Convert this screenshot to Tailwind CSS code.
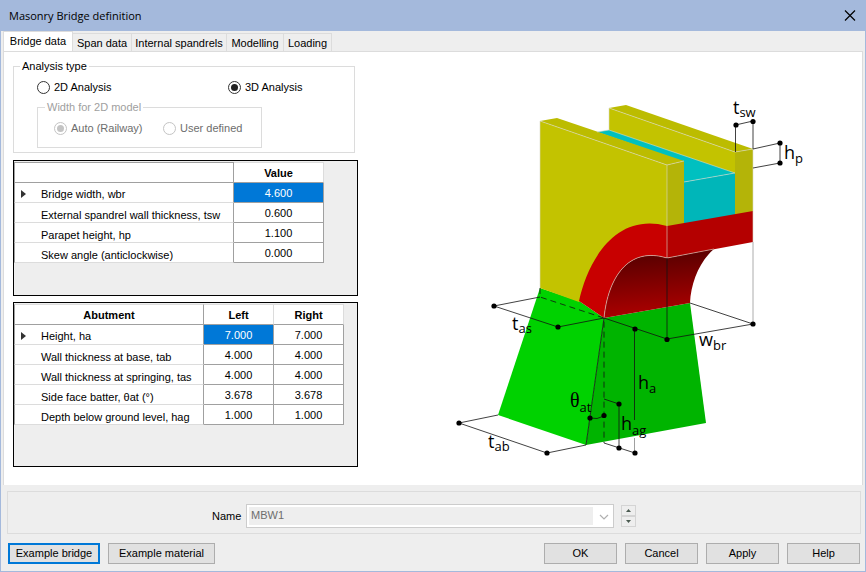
<!DOCTYPE html>
<html lang="en">
    <head>
        <title>Masonry Bridge definition</title>
        <meta charset="UTF-8">
        <meta name="viewport" content="width=device-width, initial-scale=1">
        <script src="https://cdn.jsdelivr.net/npm/@tailwindcss/browser@4"></script>
    </head>
    <body class="min-h-screen flex flex-col bg-[#eeeeee] border border-t-0 border-[#a4b9dc] font-['Liberation_Sans',Arial,sans-serif] text-[11px] leading-4 text-black">
        <header class="h-[31px] shrink-0 flex items-center justify-between bg-[#a4b9dc] pl-2 pr-[9px]">
            <h1 class="font-['Open_Sans',sans-serif] text-[11px]">Masonry Bridge definition</h1>
            <button aria-label="Close" class="p-0">
                <svg class="w-3 h-3" viewBox="0 0 12 12" fill="none" stroke="#000" stroke-width="1.2"><path d="M1 0.500l10 10M11 0.500L1 10.500"/></svg>
            </button>
        </header>

        <main class="flex-1 flex flex-col px-[2px]">
            <nav role="tablist" class="h-5 flex items-end">
                <button role="tab" aria-selected="true" class="h-5 w-[70px] bg-white border border-b-0 border-[#dcdcdc] pb-[2px] z-10">Bridge data</button>
                <button role="tab" class="h-[18px] w-[59px] border-t border-r border-[#dcdcdc]">Span data</button>
                <button role="tab" class="h-[18px] w-[95px] border-t border-r border-[#dcdcdc] whitespace-nowrap">Internal spandrels</button>
                <button role="tab" class="h-[18px] w-[57px] border-t border-r border-[#dcdcdc]">Modelling</button>
                <button role="tab" class="h-[18px] w-[48px] border-t border-r border-[#dcdcdc]">Loading</button>
            </nav>

            <section role="tabpanel" class="flex-1 flex bg-white border border-b-0 border-[#dcdcdc] pl-[9px] pt-[6px]">
                <div class="w-[345px] shrink-0 flex flex-col">
                    <fieldset class="w-[342px] border border-[#dcdcdc] px-[23px] pt-px pb-1">
                        <legend class="-ml-[17px] px-[2px]">Analysis type</legend>
                        <div class="flex items-center h-6">
                            <label class="flex items-center gap-1 w-[191px]">
                                <input type="radio" name="analysis" class="appearance-none w-[13px] h-[13px] rounded-full border border-[#333] bg-white">2D Analysis
                            </label>
                            <label class="flex items-center gap-1">
                                <input type="radio" name="analysis" checked class="appearance-none w-[13px] h-[13px] rounded-full border border-[#333] bg-[#222] bg-clip-content p-[2px]">3D Analysis
                            </label>
                        </div>
                        <fieldset disabled class="w-[225px] border border-[#dcdcdc] pl-4 pt-px pb-[7px] text-[#6d6d6d]">
                            <legend class="-ml-[9px] px-[2px] text-[#a0a0a0]">Width for 2D model</legend>
                            <div class="flex items-center h-6">
                                <label class="flex items-center gap-1 w-[109px] whitespace-nowrap">
                                    <input type="radio" name="width" checked class="appearance-none w-[13px] h-[13px] rounded-full border border-[#c4c4c4] bg-[#c4c4c4] bg-clip-content p-[2px]">Auto (Railway)
                                </label>
                                <label class="flex items-center gap-1 whitespace-nowrap">
                                    <input type="radio" name="width" class="appearance-none w-[13px] h-[13px] rounded-full border border-[#c4c4c4] bg-white">User defined
                                </label>
                            </div>
                        </fieldset>
                    </fieldset>

                    <div class="h-[136px] mt-[7px] border border-black bg-[#eeeeee] pt-px">
                        <table class="table-fixed w-[310px] border-separate border-spacing-0 bg-white text-center">
                            <thead>
                                <tr class="h-[21px]">
                                    <th class="w-[220px] p-0 border-r border-b border-t border-l border-[#a0a0a0]"></th>
                                    <th class="p-0 border-r border-b border-t border-[#a0a0a0] border-t-[#dcdcdc] border-r-[#dcdcdc]">Value</th>
                                </tr>
                            </thead>
                            <tbody>
                                <tr class="h-5">
                                    <th class="p-0 border-r border-b border-l border-[#a0a0a0] border-b-[#dcdcdc] font-normal text-left">
                                        <div class="flex items-center pl-[5px] pt-[3px] h-[19px]"><svg class="w-[21px] h-2" viewBox="0 0 21 8" fill="#333"><path d="M1 0l5 4-5 4z"/></svg>Bridge width, wbr</div>
                                    </th>
                                    <td class="p-0 border-r border-b border-[#a0a0a0] bg-[#0078d7] text-white">4.600</td>
                                </tr>
                                <tr class="h-5">
                                    <th class="p-0 border-r border-b border-l border-[#a0a0a0] border-b-[#dcdcdc] font-normal text-left whitespace-nowrap"><div class="pl-[26px] pt-1 h-[19px]">External spandrel wall thickness, tsw</div></th>
                                    <td class="p-0 border-r border-b border-[#a0a0a0]">0.600</td>
                                </tr>
                                <tr class="h-5">
                                    <th class="p-0 border-r border-b border-l border-[#a0a0a0] border-b-[#dcdcdc] font-normal text-left"><div class="pl-[26px] pt-1 h-[19px]">Parapet height, hp</div></th>
                                    <td class="p-0 border-r border-b border-[#a0a0a0]">1.100</td>
                                </tr>
                                <tr class="h-5">
                                    <th class="p-0 border-r border-b border-l border-[#a0a0a0] border-b-[#dcdcdc] font-normal text-left"><div class="pl-[26px] pt-1 h-[19px]">Skew angle (anticlockwise)</div></th>
                                    <td class="p-0 border-r border-b border-[#a0a0a0]">0.000</td>
                                </tr>
                            </tbody>
                        </table>
                    </div>

                    <div class="h-[165px] mt-[6px] border border-black bg-[#eeeeee] pt-px">
                        <table class="table-fixed w-[330px] border-separate border-spacing-0 bg-white text-center">
                            <thead>
                                <tr class="h-[21px]">
                                    <th class="w-[190px] p-0 border-r border-b border-l border-t border-[#a0a0a0] border-t-[#dcdcdc]">Abutment</th>
                                    <th class="w-[70px] p-0 border-r border-b border-t border-[#a0a0a0] border-t-[#dcdcdc] border-r-[#dcdcdc]">Left</th>
                                    <th class="w-[70px] p-0 border-r border-b border-t border-[#a0a0a0] border-t-[#dcdcdc] border-r-[#dcdcdc]">Right</th>
                                </tr>
                            </thead>
                            <tbody>
                                <tr class="h-5">
                                    <th class="p-0 border-r border-b border-l border-[#a0a0a0] border-b-[#dcdcdc] font-normal text-left">
                                        <div class="flex items-center pl-[5px] pt-[3px] h-[19px]"><svg class="w-[21px] h-2" viewBox="0 0 21 8" fill="#333"><path d="M1 0l5 4-5 4z"/></svg>Height, ha</div>
                                    </th>
                                    <td class="p-0 border-r border-b border-[#a0a0a0] bg-[#0078d7] text-white">7.000</td>
                                    <td class="p-0 border-r border-b border-[#a0a0a0]">7.000</td>
                                </tr>
                                <tr class="h-5">
                                    <th class="p-0 border-r border-b border-l border-[#a0a0a0] border-b-[#dcdcdc] font-normal text-left"><div class="pl-[26px] pt-1 h-[19px]">Wall thickness at base, tab</div></th>
                                    <td class="p-0 border-r border-b border-[#a0a0a0]">4.000</td>
                                    <td class="p-0 border-r border-b border-[#a0a0a0]">4.000</td>
                                </tr>
                                <tr class="h-5">
                                    <th class="p-0 border-r border-b border-l border-[#a0a0a0] border-b-[#dcdcdc] font-normal text-left whitespace-nowrap"><div class="pl-[26px] pt-1 h-[19px]">Wall thickness at springing, tas</div></th>
                                    <td class="p-0 border-r border-b border-[#a0a0a0]">4.000</td>
                                    <td class="p-0 border-r border-b border-[#a0a0a0]">4.000</td>
                                </tr>
                                <tr class="h-5">
                                    <th class="p-0 border-r border-b border-l border-[#a0a0a0] border-b-[#dcdcdc] font-normal text-left"><div class="pl-[26px] pt-1 h-[19px]">Side face batter, θat (°)</div></th>
                                    <td class="p-0 border-r border-b border-[#a0a0a0]">3.678</td>
                                    <td class="p-0 border-r border-b border-[#a0a0a0]">3.678</td>
                                </tr>
                                <tr class="h-5">
                                    <th class="p-0 border-r border-b border-l border-[#a0a0a0] border-b-[#dcdcdc] font-normal text-left whitespace-nowrap"><div class="pl-[26px] pt-1 h-[19px]">Depth below ground level, hag</div></th>
                                    <td class="p-0 border-r border-b border-[#a0a0a0]">1.000</td>
                                    <td class="p-0 border-r border-b border-[#a0a0a0]">1.000</td>
                                </tr>
                            </tbody>
                        </table>
                    </div>
                </div>

                <div class="flex-1 pl-[82px] pt-8">
                    <svg class="w-[380px] h-[380px] font-['Open_Sans',sans-serif]" viewBox="440 90 380 380" role="img" aria-label="Masonry bridge dimensions">
                        <defs>
                            <linearGradient id="barrel" x1="0" y1="0" x2="0.15" y2="1">
                                <stop offset="0.2" stop-color="#600000"/>
                                <stop offset="1" stop-color="#ac0000"/>
                            </linearGradient>
                        </defs>
                        <!-- abutment -->
                        <path fill="#00d200" d="M540 288L579 301L604 318L586 445L498 415Z"/>
                        <path fill="#00b400" d="M604 318L690 303L706 423L586 445Z"/>
                        <!-- far parapet and fill -->
                        <path fill="#c3c300" d="M609 108L735 152V174L609 131Z"/>
                        <path fill="#bcbc00" d="M609 108L626 105L753 149L735 152Z"/>
                        <path fill="#b4b408" d="M735 152L753 149V212L735 215Z"/>
                        <path fill="#00c0c0" d="M597 132L609 130L735 173L684 182V162Z"/>
                        <path fill="#00b6b9" d="M684 182L735 173V215L684 224Z"/>
                        <!-- near spandrel wall -->
                        <path fill="#c3c300" d="M540 121L667 165V227L579 302L540 288Z"/>
                        <path fill="#bcbc00" d="M540 121L557 118L684 161L667 165Z"/>
                        <path fill="#b4b408" d="M667 165L684 161V225L667 227Z"/>
                        <!-- arch -->
                        <path fill="url(#barrel)" d="M604 318C608 278 628 246 667 258L714 249C699 262 691 283 690 303Z"/>
                        <path fill="#c80000" d="M579 301C588 260 616 212 667 226V258C628 246 608 278 604 318Z"/>
                        <path fill="#b40000" d="M667 226L753 211V242L667 258Z"/>
                        <g fill="none" stroke="#d8d8c8" stroke-width="1" stroke-opacity=".6">
                            <path d="M540 288V121L667 165V258L714 249M667 165L684 161M609 130V108L735 152L753 149V242M735 173L684 182M597 132L609 130L735 173M604 318C608 278 628 246 667 258"/>
                            <path stroke="#777" d="M753 242V324"/>
                        </g>
                        <!-- dimension lines -->
                        <g fill="none" stroke="#111" stroke-width=".8">
                            <path d="M735.500 152V125L753 121V149L780 143V163L753 168"/>
                            <path d="M540 297L494 306L558 327L604 318L667 339L753 324L690 303M667 258V339"/>
                            <path d="M604 318L586 445L547 453L459 423L498 415"/>
                            <path d="M634.500 329V420M604 399L619 404V448M604 443L635 453"/>
                            <path stroke="#888" d="M634.500 438V453"/>
                            <path d="M590 418Q597 420 604 416"/>
                            <path stroke-dasharray="6 4" d="M540 288V297L604 318V443"/>
                        </g>
                        <g fill="#000">
                            <circle cx="736" cy="125" r="2.600"/><circle cx="753" cy="121.500" r="2.600"/>
                            <circle cx="780" cy="143" r="2.600"/><circle cx="780" cy="163" r="2.600"/>
                            <circle cx="494" cy="306" r="2.600"/><circle cx="558" cy="327" r="2.600"/>
                            <circle cx="635" cy="329" r="2.600"/><circle cx="667" cy="339.500" r="2.600"/>
                            <circle cx="753" cy="324" r="2.600"/><circle cx="619" cy="404" r="2.600"/>
                            <circle cx="590" cy="418" r="2.600"/><circle cx="604" cy="415.500" r="2.600"/>
                            <circle cx="619" cy="448" r="2.600"/><circle cx="635" cy="453" r="2.600"/>
                            <circle cx="459" cy="423" r="2.600"/><circle cx="547" cy="453" r="2.600"/>
                        </g>
                        <g fill="#000" class="text-[18px]">
                            <text x="733" y="114">t<tspan class="text-[13px]" dy="3">sw</tspan></text>
                            <text x="784" y="159">h<tspan class="text-[13px]" dy="4">p</tspan></text>
                            <text x="512" y="330">t<tspan class="text-[13px]" dy="3">as</tspan></text>
                            <text x="488" y="448">t<tspan class="text-[13px]" dy="3">ab</tspan></text>
                            <text x="570" y="407" class="text-[20px] font-['Liberation_Serif',serif]">θ<tspan class="text-[13px] font-['Open_Sans',sans-serif]" dy="5">at</tspan></text>
                            <text x="638" y="389">h<tspan class="text-[13px]" dy="4">a</tspan></text>
                            <text x="621" y="430">h<tspan class="text-[13px]" dy="5">ag</tspan></text>
                            <text x="699" y="346">w<tspan class="text-[13px]" dy="4">br</tspan></text>
                        </g>
                    </svg>
                </div>
            </section>
        </main>

        <footer class="pl-[6px] pr-1 pt-[6px] pb-[7px]">
            <div class="h-[43px] flex items-center border border-[#dcdcdc] pl-[204px] pt-[6px]">
                <label for="name" class="w-[34px]">Name</label>
                <div class="flex w-[368px] h-6 border border-[#cccccc] bg-white p-[2px]">
                    <select id="name" disabled class="appearance-none flex-1 bg-[#eeeeee] text-[#6d6d6d] pl-[2px] pb-[6px] opacity-100">
                        <option>MBW1</option>
                    </select>
                    <svg class="w-[18px] h-[18px]" viewBox="0 0 18 18" fill="none" stroke="#b0b0b0" stroke-width="1.2"><path d="M7 8l4 4 4-4"/></svg>
                </div>
                <div class="ml-[7px] flex flex-col">
                    <button aria-label="Previous" class="w-[15px] h-[11px] flex items-center justify-center border border-[#d4d4d4]"><svg class="w-[5px] h-[3px]" viewBox="0 0 5 3" fill="#4a5a50"><path d="M0 3l2.500-3L5 3z"/></svg></button>
                    <button aria-label="Next" class="w-[15px] h-[11px] flex items-center justify-center border border-[#d4d4d4]"><svg class="w-[5px] h-[3px]" viewBox="0 0 5 3" fill="#4a5a50"><path d="M0 0l2.500 3L5 0z"/></svg></button>
                </div>
            </div>
            <div class="mt-[9px] flex gap-2 px-px">
                <button class="w-[92px] h-[21px] bg-[#e1e1e1] border-2 border-[#0078d7] whitespace-nowrap leading-none">Example bridge</button>
                <button class="w-[107px] h-[21px] bg-[#e1e1e1] border border-[#adadad] leading-none">Example material</button>
                <button class="ml-auto w-[73px] h-[21px] bg-[#e1e1e1] border border-[#adadad] leading-none">OK</button>
                <button class="w-[73px] h-[21px] bg-[#e1e1e1] border border-[#adadad] leading-none">Cancel</button>
                <button class="w-[73px] h-[21px] bg-[#e1e1e1] border border-[#adadad] leading-none">Apply</button>
                <button class="w-[73px] h-[21px] bg-[#e1e1e1] border border-[#adadad] leading-none">Help</button>
            </div>
        </footer>
    </body>
</html>
